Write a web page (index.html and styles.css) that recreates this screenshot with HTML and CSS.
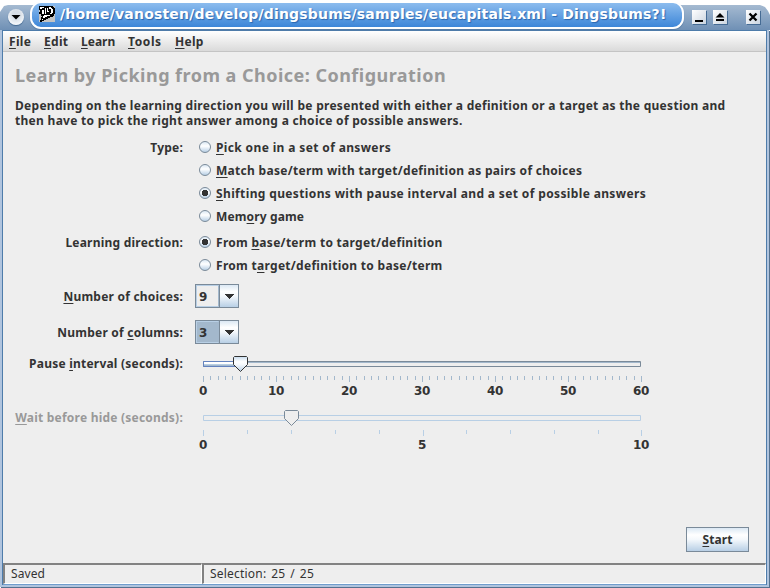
FILE: index.html
```
<!DOCTYPE html>
<html lang="en">
<head>
<meta charset="utf-8">
<title>Dingsbums?!</title>
<link rel="stylesheet" href="styles.css">
</head>
<body>
<div class="window">
  <header class="titlebar">
    <span class="orb"><svg width="16" height="16" viewBox="0 0 16 16"><path d="M3.5 6h9L8 10.500z"/></svg></span>
    <div class="caption">
      <svg class="logo" width="16" height="16" viewBox="0 0 16 16" shape-rendering="crispEdges">
        <path fill="#c3c3c3" d="M0 0h16v16H0z"/>
        <path fill="#000" d="M0 0h14v1h1v1h1v6h-1v2h-1v1h-3v1H9v1H7v1H5v1H3v1H1v-2h1v-3h1v-1H2V8H0V6h1V4H0z"/>
        <path fill="#fff" d="M1 1h4v1H3v1H1zM3 4h2v4H3zM6 2h1v6H6zM8 2h1v3h1v1H8zM10 1h2v1h1v1h1v4h-1v1h-2V7h1V3h-2zM5 9h6v1H8v1H6v1H4v-2h1zM3 13h1v1H3z"/>
      </svg>
      <span class="caption-text">/home/vanosten/develop/dingsbums/samples/eucapitals.xml - Dingsbums?!</span>
    </div>
    <div class="controls">
      <span class="ctl"><svg width="14" height="14" viewBox="0 0 14 14"><path d="M3 10h8v2H3z"/></svg></span>
      <span class="ctl"><svg width="14" height="14" viewBox="0 0 14 14"><path d="M7 3l4.500 4.500h-9zM3 9h8v2H3z"/></svg></span>
      <span class="ctl close"><svg width="14" height="14" viewBox="0 0 14 14"><path d="M3.500 3.500l7 7M10.500 3.500l-7 7" stroke="#000" stroke-width="2.300"/></svg></span>
    </div>
  </header>
  <div class="frame">
    <nav class="menubar">
      <span class="m-file"><u>F</u>ile</span><span class="m-edit"><u>E</u>dit</span><span class="m-learn"><u>L</u>earn</span><span class="m-tools"><u>T</u>ools</span><span><u>H</u>elp</span>
    </nav>
    <main class="content">
      <h1>Learn by Picking from a Choice: Configuration</h1>
      <p class="intro">Depending on the learning direction you will be presented with either a definition or a target as the question and<br>then have to pick the right answer among a choice of possible answers.</p>
      <div class="form">
        <span class="label">Type:</span>
        <div class="radios">
          <label><i class="radio"></i><span class="wide"><u>P</u>ick one in a set of answers</span></label>
          <label><i class="radio"></i><span><u>M</u>atch base/term with target/definition as pairs of choices</span></label>
          <label><i class="radio on"></i><span class="wide"><u>S</u>hifting questions with pause interval and a set of possible answers</span></label>
          <label><i class="radio"></i><span class="tight">Mem<u>o</u>ry game</span></label>
        </div>
        <span class="label">Learning direction:</span>
        <div class="radios direction">
          <label><i class="radio on"></i><span>From <u>b</u>ase/term to target/definition</span></label>
          <label><i class="radio"></i><span>From t<u>a</u>rget/definition to base/term</span></label>
        </div>
        <span class="label combo-label"><u>N</u>umber of choices:</span>
        <div class="combo"><span class="value">9</span><span class="arrow"><svg width="10" height="5" viewBox="0 0 10 5" shape-rendering="crispEdges"><path d="M0 0h10L5 5z"/></svg></span></div>
        <span class="label combo-label">Number of <u>c</u>olumns:</span>
        <div class="combo focused"><span class="value">3</span><span class="arrow"><svg width="10" height="5" viewBox="0 0 10 5" shape-rendering="crispEdges"><path d="M0 0h10L5 5z"/></svg></span></div>
        <span class="label slider-label">Pause <u>i</u>nterval (seconds):</span>
        <div class="slider">
          <svg width="439" height="26" viewBox="0 0 439 26">
            <defs>
              <linearGradient id="thumb" x2="0" y2="1"><stop offset="0" stop-color="#c6dbee"/><stop offset=".35" stop-color="#fff"/><stop offset=".55" stop-color="#f4f8fc"/><stop offset="1" stop-color="#b8cfe5"/></linearGradient>
              <pattern id="minor" width="73" height="6" patternUnits="userSpaceOnUse"><path fill="#a3b8cc" d="M0 0h1v6H0zM7 0h1v4H7zM15 0h1v4h-1zM22 0h1v4h-1zM29 0h1v4h-1zM37 0h1v4h-1zM44 0h1v4h-1zM51 0h1v4h-1zM58 0h1v4h-1zM66 0h1v4h-1z"/></pattern>
            </defs>
            <path fill="none" stroke="#7a8a99" d="M.5 5.500h437v5H.5z"/>
            <path stroke="#a3b8cc" d="M1 6.500h436"/>
            <path fill="#fff" d="M1 6h37v2H1z"/><path fill="#b8cfe5" d="M1 8h37v1H1z"/><path fill="#a3b8cc" d="M1 9h37v1H1z"/>
            <path fill="none" stroke="#6382bf" d="M38 5.500H.5v5H38"/>
            <path fill="url(#thumb)" stroke="#333" d="M31.500.5h12l1 1v7L37.500 15.500 30.500 8.500v-7z"/>
            <g transform="translate(0 20)"><path fill="url(#minor)" d="M0 0h439v6H0z"/></g>
          </svg>
          <div class="scale"><span>0</span><span>10</span><span>20</span><span>30</span><span>40</span><span>50</span><span>60</span></div>
        </div>
        <span class="label slider-label disabled"><u>W</u>ait before hide (seconds):</span>
        <div class="slider">
          <svg width="439" height="26" viewBox="0 0 439 26">
            <path fill="none" stroke="#b8cfe5" d="M.5 5.500h437v5H.5z"/>
            <path fill="#eee" stroke="#7a8a99" d="M82.500.5h12l1 1v7L88.500 15.500 81.500 8.500v-7z"/>
            <path fill="#b8cfe5" d="M0 20h1v6H0zM44 20h1v4h-1zM88 20h1v4h-1zM132 20h1v4h-1zM176 20h1v4h-1zM220 20h1v6h-1zM263 20h1v4h-1zM307 20h1v4h-1zM351 20h1v4h-1zM395 20h1v4h-1zM438 20h1v6h-1z"/>
          </svg>
          <div class="scale"><span>0</span><span>5</span><span>10</span></div>
        </div>
      </div>
      <div class="actions"><button class="start" type="button"><u>S</u>tart</button></div>
    </main>
    <footer class="status"><span class="cell saved">Saved</span><span class="cell">Selection: 25 / 25</span></footer>
  </div>
</div>
</body>
</html>
```
FILE: styles.css
```
* { box-sizing: border-box; }
body {
  margin: 0;
  background: #fff;
  color: #333;
  font: bold 12px/15px "Noto Sans", "Open Sans", sans-serif;
  letter-spacing: .29px;
}
u { text-decoration: underline; text-decoration-thickness: 1px; text-underline-offset: 2px; text-decoration-skip-ink: none; }
.window {
  width: 770px;
  height: 588px;
  padding-top: 2px;
  display: flex;
  flex-direction: column;
}
.titlebar {
  display: flex;
  align-items: flex-start;
  height: 28px;
  background: linear-gradient(#a5bad1, #6f90b5) 0 3px / 100% 25px no-repeat;
  clip-path: polygon(2px 7px, 4px 4px, 8px 3px, 30px 3px, 31px 0, 684px 0, 685px 3px, 760px 3px, 765px 5px, 768px 9px, 770px 13px, 770px 29px, 0 29px, 0 10px);
}
.orb {
  width: 16px;
  height: 16px;
  margin: 7px 0 0 8px;
  border-radius: 50%;
  background: radial-gradient(circle at 50% 35%, #d6dde5 30%, #f5f8fb 75%);
  box-shadow: 0 1px 1px #42688f;
}
.orb svg, .ctl svg { display: block; }
.caption {
  width: 654px;
  height: 27px;
  margin-left: 6px;
  padding: 2px 0 0 7px;
  display: flex;
  border: 2px solid #fff;
  border-top-width: 1px;
  border-radius: 11px;
  background: linear-gradient(#8cbcee, #3d86d8);
  box-shadow: 0 1px 1px #547ba5;
}
.logo { margin-top: 1px; }
.caption-text {
  margin-left: 5px;
  color: #fff;
  font: bold 14px/18px "DejaVu Sans", sans-serif;
  letter-spacing: .19px;
  white-space: nowrap;
  text-shadow: 1px 1px 1px #2a68b0;
}
.controls { display: flex; margin: 8px 0 0 8px; }
.ctl {
  width: 14px;
  height: 14px;
  margin-right: 7px;
  background: linear-gradient(135deg, #fff, #cbd5e0);
  box-shadow: 1px 1px 0 #456b94;
}
.close { margin: 0 0 0 12px; }
.frame {
  height: 557px;
  margin-right: 1px;
  display: flex;
  flex-direction: column;
  padding: 0 1px 1px;
  background: #eee;
  border: solid #b0c4de;
  border-width: 0 2px 2px;
  box-shadow: inset 1px 0 #4e7caa, inset -1px 0 #4e7caa, inset 0 -1px #6f9ccc, 1px 1px 0 #55718f;
}
.menubar {
  height: 22px;
  flex: none;
  display: flex;
  padding: 3px 0 0 6px;
  border-top: 1px solid #4e7caa;
  border-bottom: 1px solid #c4c4c4;
  background: linear-gradient(#fff, #dadada);
}
.m-file { width: 35px; }
.m-edit { width: 37px; }
.m-learn { width: 47px; letter-spacing: 0; }
.m-tools { width: 47px; letter-spacing: .6px; }
.content { flex: 1; padding: 11px 17px 0 12px; display: flex; flex-direction: column; }
h1 { margin: 0; height: 35px; font-size: 18px; line-height: 24px; color: #999; letter-spacing: .47px; }
.intro { margin: 0; white-space: nowrap; }
.form { display: grid; grid-template-columns: 168px 1fr; column-gap: 12px; margin-top: 12px; }
.label { text-align: right; letter-spacing: .22px; white-space: nowrap; }
.radios { display: grid; grid-auto-rows: 23px; height: 95px; }
.direction { height: 49px; }
.radios label { display: flex; height: 15px; white-space: nowrap; }
.radios label span { margin-left: 5px; }
.radios .wide { letter-spacing: .364px; }
.radios .tight { letter-spacing: .13px; }
.radio {
  width: 12px;
  height: 12px;
  margin: 1px 0 0 4px;
  border: 1px solid #7a8a99;
  border-radius: 50%;
  background: linear-gradient(#dbe8f4, #fff 40%, #f4f8fc 50%, #b8cfe5);
}
.on { background: radial-gradient(circle, #333 3px, transparent 3.5px), linear-gradient(#dbe8f4, #fff 40%, #b8cfe5); }
.combo-label { padding-top: 5px; }
.combo {
  display: flex;
  width: 44px;
  height: 24px;
  margin-bottom: 12px;
  border: 1px solid #7a8a99;
}
.value { width: 23px; padding: 4px 0 0 2px; border: 1px solid #b8cfe5; border-right-color: #a3b8cc; }
.value, .scale { font-family: "DejaVu Sans", sans-serif; font-size: 12px; letter-spacing: -.4px; }
.focused .value { background: #a3b8cc; }
.arrow {
  flex: 1;
  display: flex;
  align-items: center;
  padding-left: 4px;
  border-left: 1px solid #7a8a99;
  background: linear-gradient(#dbe8f4, #fff 30%, #f4f8fc 50%, #b8cfe5);
}
.arrow svg { fill: #333; }
.slider-label { height: 54px; }
.disabled { color: #999; }
.slider { padding-left: 8px; }
.slider svg { display: block; }
.scale { display: flex; justify-content: space-between; width: 462px; margin: 2px 0 0 -12px; }
.scale span { width: 24px; text-align: center; }
.actions { display: flex; justify-content: flex-end; margin-top: auto; padding-bottom: 11px; }
.start {
  width: 63px;
  height: 25px;
  padding: 0;
  border: 1px solid #7a8a99;
  color: #333;
  font: inherit;
  letter-spacing: .1px;
  background: linear-gradient(#dbe8f4, #fff 30%, #f4f8fc 50%, #b8cfe5);
}
.status { display: grid; grid-template-columns: 199px 1fr; height: 21px; font-weight: normal; letter-spacing: .2px; word-spacing: 1.6px; }
.cell {
  padding: 1px 0 0 6px;
  border: solid;
  border-width: 2px 1px 1px 2px;
  border-color: #828282 #fff #fff #828282;
}
.saved { letter-spacing: .1px; }
```
